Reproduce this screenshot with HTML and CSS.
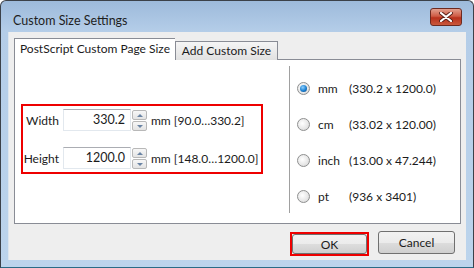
FILE: index.html
```html
<!DOCTYPE html>
<html lang="en">
<head>
  <meta charset="UTF-8" />
  <title>Custom Size Settings</title>
  <link rel="stylesheet" href="styles.css">
</head>
<body>

  <div class="window">
    <div class="titlebar">
      <span class="title">Custom Size Settings</span>
      <button class="close">
        <svg width="14" height="10" viewBox="0 0 14 10">
          <path d="M2 1 L12 9 M12 1 L2 9" stroke="#5a2018" stroke-width="4" stroke-linecap="round"/>
          <path d="M2 1 L12 9 M12 1 L2 9" stroke="#fff" stroke-width="2.2" stroke-linecap="round"/>
        </svg>
      </button>
    </div>

    <div class="client">
      <div class="tabs">
        <div class="tab active">PostScript Custom Page Size</div>
        <div class="tab">Add Custom Size</div>
      </div>

      <div class="panel">
        <div class="size-side">
          <div class="size-box">
            <div class="field">
              <label>Width</label>
              <div class="input">330.2</div>
              <div class="spin"><span class="up"></span><span class="down"></span></div>
              <span class="range">mm [90.0…330.2]</span>
            </div>
            <div class="field">
              <label>Height</label>
              <div class="input">1200.0</div>
              <div class="spin"><span class="up"></span><span class="down"></span></div>
              <span class="range">mm [148.0…1200.0]</span>
            </div>
          </div>
        </div>

        <div class="units">
          <div class="unit"><span class="radio checked"></span><span class="u">mm</span><span>(330.2 x 1200.0)</span></div>
          <div class="unit"><span class="radio"></span><span class="u">cm</span><span>(33.02 x 120.00)</span></div>
          <div class="unit"><span class="radio"></span><span class="u">inch</span><span>(13.00 x 47.244)</span></div>
          <div class="unit"><span class="radio"></span><span class="u">pt</span><span>(936 x 3401)</span></div>
        </div>
      </div>

      <div class="buttons">
        <span class="mark"><button class="btn">OK</button></span>
        <button class="btn">Cancel</button>
      </div>
    </div>
  </div>

</body>
</html>
```

FILE: styles.css
```css
body {
  margin: 0;
  font-family: Lato, "Open Sans", sans-serif;
  font-size: 12px;
  color: #1b1b1b;
  background: #fff;
}
.window {
  width: 474px;
  height: 268px;
  box-sizing: border-box;
  border: 1px solid #3b4149;
  border-bottom-color: #2a6b86;
  border-radius: 6px 6px 0 0;
  background: linear-gradient(#9dbadb, #b4cde8 30px, #bcd4ec);
  padding: 0 7px 7px 7px;
}
.titlebar {
  height: 31px;
  display: flex;
  align-items: center;
  justify-content: space-between;
}
.title {
  margin-left: 5px;
  margin-top: 7px;
  font-size: 12.5px;
  color: #1e1e1e;
}
.close {
  width: 32px;
  height: 18px;
  margin-top: 1px;
  margin-right: 4px;
  padding: 0;
  border: 1px solid #6d2a20;
  border-radius: 3px;
  background: linear-gradient(#e2a08f, #cf5b45 45%, #b8311c 55%, #c9583c);
  display: flex;
  align-items: center;
  justify-content: center;
}
.client {
  height: 228px;
  box-sizing: border-box;
  background: #eeeeee;
  border-left: 1px solid #dde6ee;
  padding: 5px 5px 0 5px;
}
.tabs {
  display: flex;
  align-items: flex-end;
  height: 23px;
  position: relative;
  z-index: 1;
}
.tab {
  width: 103px;
  box-sizing: border-box;
  height: 19px;
  line-height: 18px;
  text-align: center;
  white-space: nowrap;
  border: 1px solid #898c95;
  border-bottom: none;
  background: linear-gradient(#f5f5f5, #e1e1e1);
  font-size: 12px;
}
.tab.active {
  width: 161px;
  height: 22px;
  line-height: 20px;
  background: #fff;
  border-right: none;
}
.panel {
  height: 165px;
  box-sizing: border-box;
  margin-top: -1px;
  border: 1px solid #898c95;
  background: #fff;
  display: flex;
}
.size-side {
  width: 274px;
  padding: 44px 0 0 6px;
  box-sizing: border-box;
}
.size-box {
  width: 242px;
  height: 70px;
  box-sizing: border-box;
  border: 2px solid #ee0000;
  padding: 3px 0 0 0;
  display: flex;
  flex-direction: column;
  gap: 16px;
}
.field {
  display: flex;
  align-items: center;
  height: 22px;
}
.field label {
  width: 36px;
  text-align: right;
  margin-right: 4px;
}
.input {
  width: 68px;
  height: 22px;
  box-sizing: border-box;
  border: 1px solid #e2e8ee;
  border-top-color: #abadb3;
  text-align: right;
  padding-right: 5px;
  line-height: 20px;
  font-size: 12.5px;
}
.spin {
  width: 15px;
  height: 21px;
  margin-left: 1px;
  display: flex;
  flex-direction: column;
  gap: 1px;
}
.spin span {
  flex: 1;
  border: 1px solid #b8b8b8;
  border-radius: 2px;
  background: linear-gradient(#f7f7f7, #e3e3e3);
  position: relative;
}
.spin span::after {
  content: "";
  position: absolute;
  left: 4px;
  top: 3px;
  border-left: 3px solid transparent;
  border-right: 3px solid transparent;
}
.spin .up::after {
  border-bottom: 3px solid #6a84a4;
}
.spin .down::after {
  border-top: 3px solid #6a84a4;
}
.range {
  margin-left: 4px;
}
.units {
  margin: 6px 0 10px 0;
  border-left: 1px solid #a0a0a0;
  padding: 13px 0 0 7px;
  display: flex;
  flex-direction: column;
  gap: 18px;
}
.unit {
  display: flex;
  align-items: center;
  height: 18px;
}
.radio {
  width: 11px;
  height: 11px;
  border: 1px solid #8e8f8f;
  border-radius: 50%;
  background: radial-gradient(circle at 40% 40%, #ffffff, #e6e6e6 60%, #cfcfcf);
  margin-right: 8px;
  position: relative;
}
.radio.checked::after {
  content: "";
  position: absolute;
  left: 2px;
  top: 2px;
  width: 7px;
  height: 7px;
  border-radius: 50%;
  background: radial-gradient(circle at 40% 35%, #8fd0ff, #1a7fd0 55%, #0a3f7a);
}
.unit .u {
  width: 31px;
}
.buttons {
  display: flex;
  justify-content: flex-end;
  align-items: flex-start;
  gap: 9px;
  padding: 7px 6px 0 0;
}
.btn {
  width: 77px;
  height: 23px;
  padding: 0;
  border: 1px solid #707070;
  border-radius: 3px;
  background: linear-gradient(#f2f2f2, #ebebeb 50%, #dddddd 51%, #cfcfcf);
  font-family: inherit;
  font-size: 12px;
  font-weight: normal;
  color: #1b1b1b;
}
.mark {
  display: block;
  margin-top: 1px;
  border: 2px solid #ee0000;
}
.mark .btn {
  display: block;
  width: 75px;
  height: 20px;
}
```
